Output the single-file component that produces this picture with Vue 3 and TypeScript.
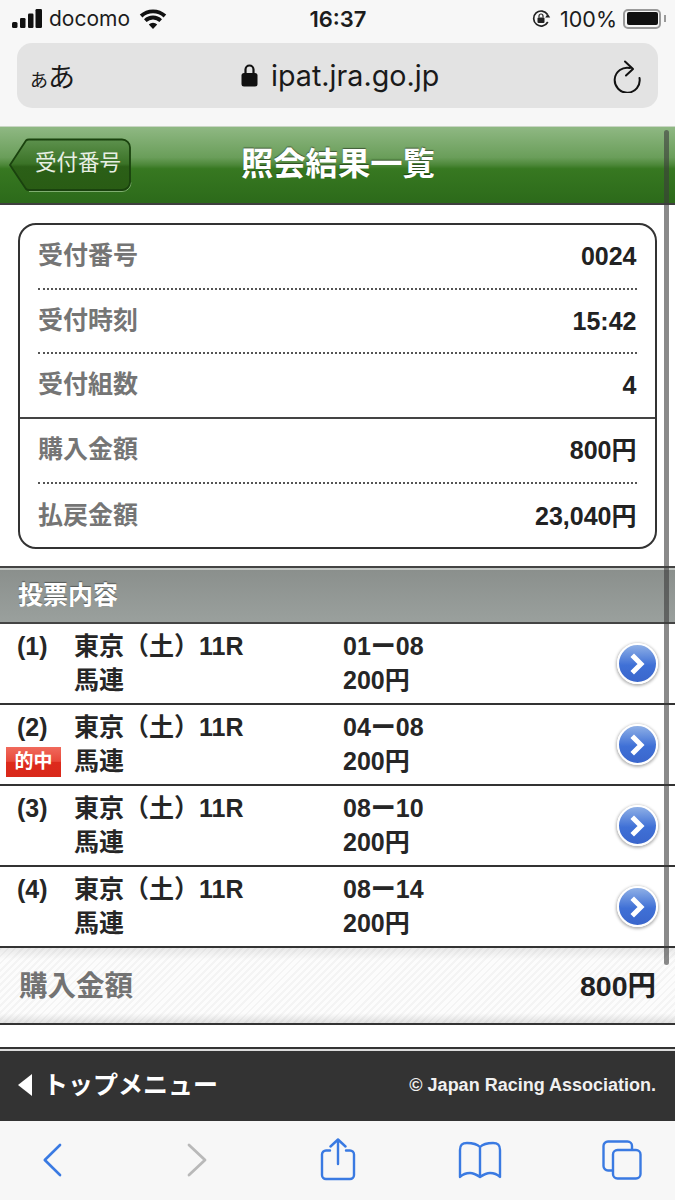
<script setup lang="ts">
interface InfoRow {
  label: string
  value: string
}

const infoTop: InfoRow[] = [
  { label: '受付番号', value: '0024' },
  { label: '受付時刻', value: '15:42' },
  { label: '受付組数', value: '4' },
]
const infoBottom: InfoRow[] = [
  { label: '購入金額', value: '800円' },
  { label: '払戻金額', value: '23,040円' },
]

const bets = [
  { no: '(1)', combo: '01ー08', hit: false },
  { no: '(2)', combo: '04ー08', hit: true },
  { no: '(3)', combo: '08ー10', hit: false },
  { no: '(4)', combo: '08ー14', hit: false },
]
</script>

<template>
  <div class="phone">
    <div class="safari-top">
      <div class="status">
        <div class="status-left">
          <svg width="30" height="19" viewBox="0 0 30 19" class="signal">
            <rect x="0" y="13" width="5.500" height="6" rx="1.500" />
            <rect x="8" y="9" width="5.500" height="10" rx="1.200" />
            <rect x="16" y="4.500" width="5.500" height="14.500" rx="1.200" />
            <rect x="23.500" y="0" width="6.500" height="19" rx="1.200" />
          </svg>
          <span class="carrier">docomo</span>
          <svg width="28" height="20" viewBox="0 0 28 20" class="wifi">
            <path d="M14 20l-4.200-4.600a6 6 0 0 1 8.400 0z" />
            <path d="M7.600 13L5 10.200a13 13 0 0 1 18 0L20.400 13a9.400 9.400 0 0 0-12.800 0z" />
            <path d="M3.400 8.400L.8 5.600a19.500 19.500 0 0 1 26.400 0l-2.600 2.800a15.700 15.700 0 0 0-21.200 0z" />
          </svg>
        </div>
        <div class="clock">16:37</div>
        <div class="status-right">
          <svg width="19" height="19" viewBox="0 0 19 19" class="lock-rot">
            <path d="M15.500 5.500A7.500 7.500 0 1 0 15.800 13" fill="none" stroke="#222" stroke-width="1.700" />
            <path d="M13.200 8.500h5l-2.500 -3.800z" fill="#222" />
            <rect x="5.500" y="8.500" width="7" height="5.500" rx="1" fill="#222" />
            <path d="M7 8.500V7a2 2 0 0 1 4 0v1.500" fill="none" stroke="#222" stroke-width="1.200" />
          </svg>
          <span class="pct">100%</span>
          <div class="battery"><div class="battery-fill"></div></div>
          <div class="battery-cap"></div>
        </div>
      </div>
      <div class="url-bar">
        <span class="aa"><small>あ</small>あ</span>
        <div class="url">
          <svg width="17" height="24" viewBox="0 0 17 24" class="lock">
            <path d="M4.500 11V6.500a4 4 0 0 1 8 0V11" fill="none" stroke="#111" stroke-width="2.200" />
            <rect x="0.500" y="10" width="16" height="13.500" rx="2.500" fill="#111" />
          </svg>
          <span>ipat.jra.go.jp</span>
        </div>
        <svg width="28" height="34" viewBox="0 0 28 34" class="reload">
          <path d="M17 9A12.500 12.500 0 1 0 26.500 19" fill="none" stroke="#111" stroke-width="2" stroke-linecap="round" />
          <path d="M12 2.500L20 10L13 16.500" fill="none" stroke="#111" stroke-width="2" stroke-linecap="round" stroke-linejoin="round" />
        </svg>
      </div>
    </div>

    <header class="head">
      <div class="back">
        <svg class="back-shape" width="126" height="56" viewBox="0 0 126 56">
          <defs>
            <linearGradient id="backFill" x1="0" y1="0" x2="0" y2="1">
              <stop offset="0" stop-color="#5d914d" />
              <stop offset="0.48" stop-color="#3b7327" />
              <stop offset="0.54" stop-color="#2b5f17" />
              <stop offset="1" stop-color="#295c14" />
            </linearGradient>
          </defs>
          <path d="M21 53.500H114a9 9 0 0 0 9-9" fill="none" stroke="#7fae70" stroke-width="1" />
          <path d="M2 27L18 2.500Q19 1.500 21 1.500H114a8 8 0 0 1 8 8V44a8 8 0 0 1-8 8H21Q19 52 18 51z" fill="url(#backFill)" stroke="#1a420e" stroke-width="1.800" stroke-linejoin="round" />
        </svg>
        <span class="back-text">受付番号</span>
      </div>
      <h1>照会結果一覧</h1>
    </header>

    <section class="card-wrap">
      <div class="card">
        <div class="info-group">
          <div v-for="row in infoTop" :key="row.label" class="info-row">
            <span class="info-label">{{ row.label }}</span>
            <span class="info-value">{{ row.value }}</span>
          </div>
        </div>
        <div class="info-group split">
          <div v-for="row in infoBottom" :key="row.label" class="info-row">
            <span class="info-label">{{ row.label }}</span>
            <span class="info-value">{{ row.value }}</span>
          </div>
        </div>
      </div>
    </section>

    <div class="section-title">投票内容</div>

    <ul class="bets">
      <li v-for="bet in bets" :key="bet.no" class="bet">
        <div class="bet-no">
          <span>{{ bet.no }}</span>
          <span v-if="bet.hit" class="hit">的中</span>
        </div>
        <div class="bet-race">
          <div>東京（土）11R</div>
          <div>馬連</div>
        </div>
        <div class="bet-combo">
          <div>{{ bet.combo }}</div>
          <div>200円</div>
        </div>
        <div class="arrow">
          <svg width="22" height="26" viewBox="0 0 22 26">
            <path d="M7 6l7 7-7 7" fill="none" stroke="#fff" stroke-width="5" stroke-linecap="square" stroke-linejoin="miter" />
          </svg>
        </div>
      </li>
    </ul>

    <div class="total">
      <span class="total-label">購入金額</span>
      <span class="total-value">800円</span>
    </div>

    <div class="gap"></div>

    <footer class="foot">
      <div class="foot-menu"><i class="tri"></i>トップメニュー</div>
      <div class="copy">© Japan Racing Association.</div>
    </footer>

    <nav class="toolbar">
      <svg width="24" height="36" viewBox="0 0 24 36">
        <path d="M20 3L4 18l16 15" fill="none" stroke="#3a7ae2" stroke-width="2.800" stroke-linecap="round" stroke-linejoin="round" transform="translate(1 0) scale(.95 1)" />
      </svg>
      <svg width="24" height="36" viewBox="0 0 24 36">
        <path d="M4 3l16 15L4 33" fill="none" stroke="#b9b9b9" stroke-width="2.800" stroke-linecap="round" stroke-linejoin="round" />
      </svg>
      <svg width="36" height="44" viewBox="0 0 36 44">
        <path d="M10 12.500H6a4 4 0 0 0-4 4V37a4 4 0 0 0 4 4H30a4 4 0 0 0 4-4V16.500a4 4 0 0 0-4-4h-4" fill="none" stroke="#3a7ae2" stroke-width="2.400" stroke-linecap="round" />
        <path d="M18 26V1.500M10.500 8.500L18 1.500l7.500 7" fill="none" stroke="#3a7ae2" stroke-width="2.400" stroke-linecap="round" stroke-linejoin="round" />
      </svg>
      <svg width="44" height="38" viewBox="0 0 44 38">
        <path d="M22 6C19 3 14 2 9 2C4 2 2 4 2 9V36C5 33 8 32 12 32C16 32 19 34 22 36C25 34 28 32 32 32C36 32 39 33 42 36V9C42 4 40 2 35 2C30 2 25 3 22 6ZM22 6V36" fill="none" stroke="#3a7ae2" stroke-width="2.400" stroke-linejoin="round" />
      </svg>
      <svg width="40" height="40" viewBox="0 0 40 40">
        <path d="M11 30.500H6A4.500 4.500 0 0 1 1.500 26V6A4.500 4.500 0 0 1 6 1.500H25.500A4.500 4.500 0 0 1 30 6V10" fill="none" stroke="#3a7ae2" stroke-width="2.400" />
        <rect x="11" y="10" width="27.500" height="28.500" rx="4.500" fill="none" stroke="#3a7ae2" stroke-width="2.400" />
      </svg>
    </nav>

    <div class="scrollbar"></div>
  </div>
</template>

<style scoped>
.phone {
  position: relative;
  width: 675px;
  height: 1200px;
  overflow: hidden;
  background: #fff;
  color: #222;
  font-family: "Liberation Sans", "Noto Sans CJK JP", sans-serif;
}

.safari-top {
  height: 126px;
  box-sizing: border-box;
  background: #f7f7f7;
  padding: 0 17px;
}
.status {
  height: 37px;
  margin: 0 -5px 6px;
  display: grid;
  grid-template-columns: 1fr auto 1fr;
  align-items: center;
  font-family: Inter, "Liberation Sans", sans-serif;
  font-size: 21.500px;
  color: #1c1c1c;
}
.status-left {
  display: flex;
  align-items: center;
}
.signal {
  fill: #111;
  margin-right: 7px;
}
.carrier {
  font-size: 21px;
}
.wifi {
  fill: #111;
  margin-left: 9px;
}
.clock {
  font-weight: 600;
  font-size: 22px;
  margin-left: 1px;
}
.status-right {
  display: flex;
  align-items: center;
  justify-content: flex-end;
}
.lock-rot {
  margin-right: 9px;
}
.pct {
  margin-right: 6px;
}
.battery {
  width: 38px;
  height: 20px;
  box-sizing: border-box;
  border: 2px solid #9a9a9a;
  border-radius: 5px;
  padding: 1.500px;
}
.battery-fill {
  height: 100%;
  background: #111;
  border-radius: 2px;
}
.battery-cap {
  width: 2px;
  height: 7px;
  margin: 0 -3px 0 3px;
  background: #9a9a9a;
}
.url-bar {
  height: 65px;
  background: #e3e3e3;
  border-radius: 15px;
  display: flex;
  align-items: center;
  padding: 0 17px 0 13px;
  position: relative;
  justify-content: space-between;
}
.aa {
  font-family: "Noto Sans CJK JP", sans-serif;
  font-size: 27px;
  color: #1a1a1a;
}
.aa small {
  font-size: 18px;
}
.url {
  position: absolute;
  left: 224px;
  top: 0;
  bottom: 0;
  display: flex;
  align-items: center;
  gap: 13px;
  font-family: Inter, "Liberation Sans", sans-serif;
  font-size: 28.700px;
  color: #1a1a1a;
}
.lock {
  margin-top: -2px;
}

.head {
  height: 79px;
  box-sizing: border-box;
  display: flex;
  align-items: center;
  position: relative;
  border-top: 1px solid #c9d6c4;
  border-bottom: 2px solid #3f3f3f;
  background: linear-gradient(#8fb883 0%, #6a9e5a 40%, #4c8738 50%, #377821 55%, #2c6a1a 100%);
}
.back {
  position: absolute;
  left: 8px;
  top: 11px;
  width: 126px;
  height: 56px;
}
.back-shape {
  display: block;
}
.back-text {
  position: absolute;
  left: 27px;
  top: 11px;
  font-size: 21.500px;
  line-height: 28px;
  color: #e8efe4;
  white-space: nowrap;
}
.head h1 {
  margin: -2px 0 0 241px;
  font-size: 32.300px;
  line-height: 40px;
  font-weight: 700;
  color: #fff;
  white-space: nowrap;
  text-shadow: 0 -1px 1px rgba(0, 0, 0, 0.45);
}

.card-wrap {
  padding: 18px 18px 17px;
}
.card {
  height: 326px;
  box-sizing: border-box;
  border: 2px solid #333;
  border-radius: 18px;
  padding: 0 18.500px 0 18px;
  display: flex;
  flex-direction: column;
}
.info-group {
  display: flex;
  flex-direction: column;
}
.info-group.split {
  margin: -2px -18.500px 0 -18px;
  padding: 0 18.500px 0 18px;
  border-top: 2px solid #444;
}
.info-row {
  height: 64.500px;
  box-sizing: border-box;
  display: flex;
  align-items: center;
  justify-content: space-between;
  border-bottom: 2px dotted #555;
}
.split .info-row {
  height: 65.500px;
}
.info-group .info-row:last-child {
  border-bottom-color: transparent;
}
.info-label {
  font-size: 25px;
  line-height: 30px;
  font-weight: 700;
  color: #757575;
  margin-top: -2px;
}
.info-value {
  font-size: 25px;
  line-height: 30px;
  font-weight: 700;
  color: #222;
}

.section-title {
  height: 58px;
  box-sizing: border-box;
  padding-left: 18px;
  border-top: 2px solid #444;
  border-bottom: 2px solid #444;
  background: linear-gradient(#8a8f8c, #9aa09d);
  box-shadow: inset 0 2px 0 #c2c6c3;
  color: #fff;
  font-size: 25px;
  font-weight: 700;
  line-height: 54px;
  text-shadow: 0 -1px 1px rgba(0, 0, 0, 0.4);
}

.bets {
  list-style: none;
  margin: 0;
  padding: 0;
}
.bet {
  position: relative;
  height: 81px;
  box-sizing: border-box;
  display: grid;
  grid-template-columns: 74px 269px 1fr;
  padding-top: 5px;
  border-bottom: 2px solid #333;
  font-size: 25px;
  font-weight: 700;
  line-height: 34px;
  color: #262626;
}
.bet-no {
  padding-left: 17px;
  position: relative;
}
.hit {
  position: absolute;
  left: 6px;
  top: 37px;
  width: 55px;
  height: 30px;
  background: linear-gradient(#f06a5c 0%, #e8483a 48%, #dd2a1c 50%, #d9281a 100%);
  color: #fff;
  font-size: 19px;
  line-height: 29px;
  text-align: center;
}
.arrow {
  position: absolute;
  right: 17px;
  top: 19px;
  width: 41px;
  height: 41px;
  box-sizing: border-box;
  border: 2.500px solid #fff;
  border-radius: 50%;
  background: linear-gradient(#8fb0e6, #3f70d6 55%, #3a66cc);
  box-shadow: 0 1px 3px 1px rgba(0, 0, 0, 0.3);
  display: flex;
  align-items: center;
  justify-content: center;
}

.total {
  height: 77px;
  box-sizing: border-box;
  display: flex;
  align-items: center;
  justify-content: space-between;
  padding: 0 19px;
  border-bottom: 2px solid #333;
  background:
    linear-gradient(rgba(0, 0, 0, 0.08), transparent 12px, transparent 65px, rgba(0, 0, 0, 0.1)),
    repeating-linear-gradient(135deg, #f4f4f4 0 2px, #fcfcfc 2px 5px);
}
.total-label {
  font-size: 28.500px;
  line-height: 34px;
  font-weight: 700;
  color: #737373;
}
.total-value {
  font-size: 28.500px;
  line-height: 34px;
  font-weight: 700;
  color: #222;
}

.gap {
  height: 22px;
}

.foot {
  height: 74px;
  box-sizing: border-box;
  display: flex;
  align-items: center;
  justify-content: space-between;
  padding: 0 19px 0 18px;
  border-top: 2px solid #333;
  box-shadow: inset 0 2px 0 #ddd;
  background: #333;
  color: #fff;
  font-weight: 700;
}
.foot-menu {
  display: flex;
  align-items: center;
  font-size: 25px;
  line-height: 30px;
}
.tri {
  width: 0;
  height: 0;
  margin-right: 11px;
  border-top: 11px solid transparent;
  border-bottom: 11px solid transparent;
  border-right: 14px solid #fff;
}
.copy {
  font-size: 18px;
  color: #f0f0f0;
}

.toolbar {
  height: 79px;
  padding-bottom: 1px;
  box-sizing: border-box;
  background: #f7f7f7;
  display: grid;
  grid-template-columns: 104px 186px 96px 188px 96px;
  align-items: center;
  justify-items: center;
}

.scrollbar {
  position: absolute;
  left: 664px;
  top: 130px;
  width: 5px;
  height: 835px;
  border-radius: 3px;
  background: rgba(60, 60, 60, 0.6);
}
</style>
